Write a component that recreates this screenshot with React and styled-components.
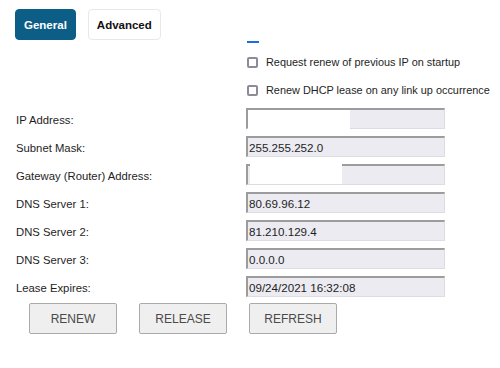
import { Fragment } from "react";
import styled, { createGlobalStyle } from "styled-components";

const GlobalStyle = createGlobalStyle`
  html, body {
    margin: 0;
    padding: 0;
    background: #ffffff;
  }
  body {
    font-family: "Liberation Sans", Arial, sans-serif;
    color: #1e1e1e;
  }
`;

const Page = styled.div`
  width: 500px;
  height: 368px;
  overflow: hidden;
`;

const TabBar = styled.div`
  display: flex;
  gap: 12px;
  padding: 9px 0 0 15px;
`;

const Tab = styled.div`
  height: 31px;
  box-sizing: border-box;
  padding: 0 8px;
  display: flex;
  align-items: center;
  border-radius: 4px;
  font-size: 11.5px;
  font-weight: bold;
  background: ${(p) => (p.$active ? "#0d5e86" : "#ffffff")};
  color: ${(p) => (p.$active ? "#ffffff" : "#111111")};
  border: 1px solid ${(p) => (p.$active ? "#0d5e86" : "#e8e8e8")};
`;

const Form = styled.div`
  display: grid;
  grid-template-columns: 246px 200px;
  grid-template-rows: 8px;
  grid-auto-rows: 28px;
`;

const Marker = styled.div`
  grid-column: 2;
  span {
    display: block;
    margin: 1px 0 0 1px;
    width: 12px;
    height: 2px;
    background: #1b6fe0;
  }
`;

const Label = styled.div`
  grid-column: 1;
  padding: 10px 0 0 16px;
  font-size: 11.3px;
  color: #1e1e1e;
  white-space: nowrap;
`;

const CheckRow = styled.label`
  grid-column: 2 / span 2;
  display: flex;
  align-items: center;
  gap: 8px;
  padding-left: 1px;
  font-size: 10.9px;
  white-space: nowrap;
`;

const Box = styled.span`
  width: 11px;
  height: 11px;
  box-sizing: border-box;
  border: 2px solid #8c8c98;
  border-radius: 2px;
  background: #fff;
  flex: none;
`;

const FieldCell = styled.div`
  grid-column: 2;
  display: flex;
  align-items: center;
`;

const Field = styled.div`
  position: relative;
  width: 199px;
  height: 21px;
  box-sizing: border-box;
  background: #ebebf1;
  border-top: 2px solid #9c9c9c;
  border-left: 2px solid #9c9c9c;
  border-right: 1px solid #dcdce2;
  border-bottom: 1px solid #dcdce2;
  padding: 1px 0 0 1px;
  font-size: 11.6px;
  line-height: 17px;
  color: #1e1e1e;
`;

const Blank = styled.span`
  position: absolute;
  left: ${(p) => p.$left}px;
  top: ${(p) => p.$top}px;
  width: ${(p) => p.$w}px;
  height: ${(p) => p.$h}px;
  background: #ffffff;
`;

const Actions = styled.div`
  display: flex;
  gap: 22px;
  padding: 3px 0 0 29px;
`;

const Button = styled.button`
  width: 88px;
  height: 31px;
  background: #efefef;
  border: 1px solid #aaaaaa;
  border-radius: 2px;
  font-family: "Liberation Sans", Arial, sans-serif;
  font-size: 12px;
  color: #4a4a4a;
  padding: 0;
`;

const rows = [
  { label: "IP Address:", value: "", blank: { $left: 0, $top: 0, $w: 102, $h: 20 } },
  { label: "Subnet Mask:", value: "255.255.252.0" },
  { label: "Gateway (Router) Address:", value: "", blank: { $left: 2, $top: -2, $w: 92, $h: 20 } },
  { label: "DNS Server 1:", value: "80.69.96.12" },
  { label: "DNS Server 2:", value: "81.210.129.4" },
  { label: "DNS Server 3:", value: "0.0.0.0" },
  { label: "Lease Expires:", value: "09/24/2021 16:32:08" },
];

const App = () => {
  return (
    <Page>
      <GlobalStyle />
      <TabBar>
        <Tab $active>General</Tab>
        <Tab>Advanced</Tab>
      </TabBar>
      <Form>
        <div />
        <Marker>
          <span />
        </Marker>
        <div />
        <CheckRow>
          <Box />
          Request renew of previous IP on startup
        </CheckRow>
        <div />
        <CheckRow>
          <Box />
          Renew DHCP lease on any link up occurrence
        </CheckRow>
        {rows.map((r) => (
          <Fragment key={r.label}>
            <Label>{r.label}</Label>
            <FieldCell>
              <Field>
                {r.blank && <Blank {...r.blank} />}
                {r.value}
              </Field>
            </FieldCell>
          </Fragment>
        ))}
      </Form>
      <Actions>
        <Button>RENEW</Button>
        <Button>RELEASE</Button>
        <Button>REFRESH</Button>
      </Actions>
    </Page>
  );
};

export default App;
